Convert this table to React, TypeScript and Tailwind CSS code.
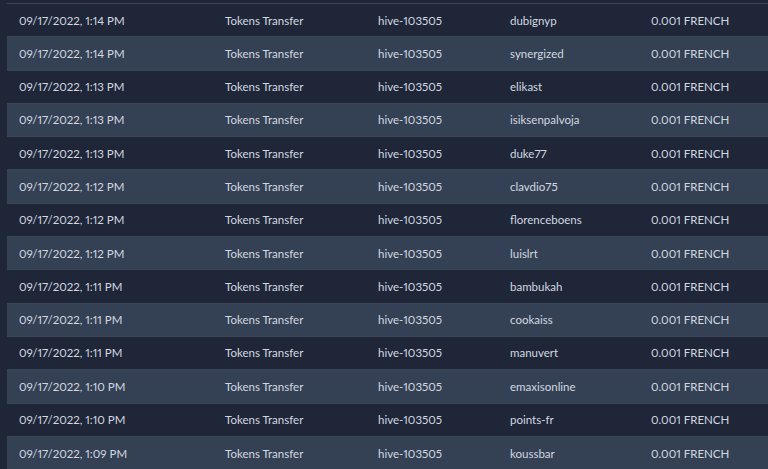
const rows = [
    ["09/17/2022, 1:14 PM", "dubignyp"],
    ["09/17/2022, 1:14 PM", "synergized"],
    ["09/17/2022, 1:13 PM", "elikast"],
    ["09/17/2022, 1:13 PM", "isiksenpalvoja"],
    ["09/17/2022, 1:13 PM", "duke77"],
    ["09/17/2022, 1:12 PM", "clavdio75"],
    ["09/17/2022, 1:12 PM", "florenceboens"],
    ["09/17/2022, 1:12 PM", "luislrt"],
    ["09/17/2022, 1:11 PM", "bambukah"],
    ["09/17/2022, 1:11 PM", "cookaiss"],
    ["09/17/2022, 1:11 PM", "manuvert"],
    ["09/17/2022, 1:10 PM", "emaxisonline"],
    ["09/17/2022, 1:10 PM", "points-fr"],
    ["09/17/2022, 1:09 PM", "koussbar"],
]

export default function App() {
    return (
        <div
            className="h-[469px] w-[768px] overflow-hidden bg-[#1e2638] pl-[7px] pt-[3px] text-[11.5px] text-[#d3d8e0] proportional-nums"
            style={{ fontFamily: "Lato, 'Open Sans', sans-serif" }}
        >
            <table className="w-full table-fixed border-collapse">
                <colgroup>
                    <col className="w-[206px]" />
                    <col className="w-[153px]" />
                    <col className="w-[132px]" />
                    <col className="w-[141px]" />
                    <col />
                </colgroup>
                <tbody>
                    {rows.map(([date, to], i) => (
                        <tr
                            key={i}
                            className={i % 2 === 1 ? "h-[33.3px] border-t border-[#3a4658] bg-[#344154]" : "h-[33.3px] border-t border-[#3a4658] bg-[#1e2638]"}
                        >
                            <td className="whitespace-nowrap pl-[12px]">{date}</td>
                            <td className="whitespace-nowrap pl-[12px]">Tokens Transfer</td>
                            <td className="whitespace-nowrap pl-[12px]">hive-103505</td>
                            <td className="whitespace-nowrap pl-[12px]">{to}</td>
                            <td className="whitespace-nowrap pl-[12px]">0.001 FRENCH</td>
                        </tr>
                    ))}
                </tbody>
            </table>
        </div>
    )
}
